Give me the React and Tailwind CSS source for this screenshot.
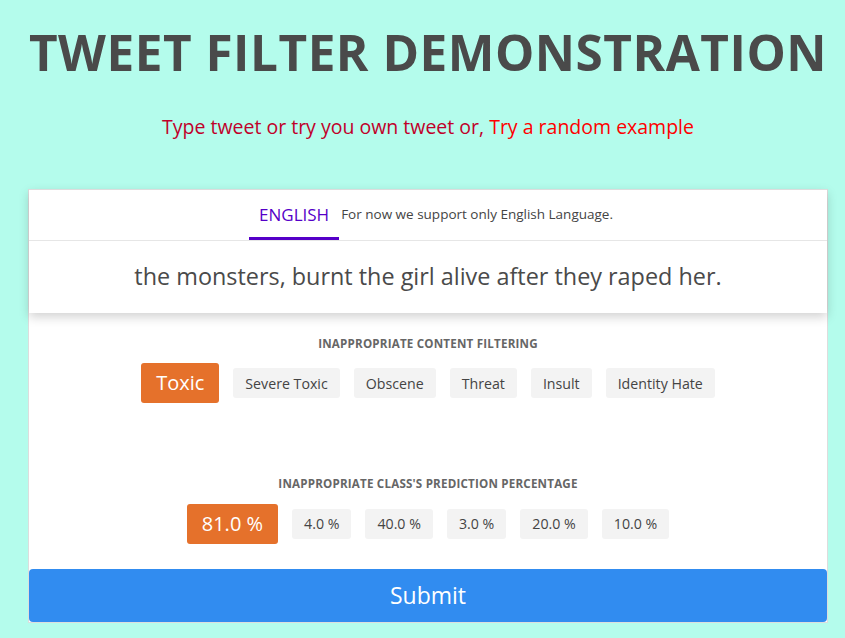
const classes = ["Toxic", "Severe Toxic", "Obscene", "Threat", "Insult", "Identity Hate"];
const percents = ["81.0 %", "4.0 %", "40.0 %", "3.0 %", "20.0 %", "10.0 %"];

function Chip({ label, active }) {
  if (active) {
    return (
      <span className="px-[15px] h-[40px] flex items-center rounded-[3px] bg-[#e5712b] text-white text-[20px]">
        {label}
      </span>
    );
  }
  return (
    <span className="px-[12px] h-[30px] flex items-center rounded-[3px] bg-[#f3f3f3] text-[#444] text-[14.2px]">
      {label}
    </span>
  );
}

export default function App() {
  return (
    <div
      className="min-h-screen bg-[#b4fcec] flex flex-col items-center pl-[11px]"
      style={{ fontFamily: "'Open Sans', 'Noto Sans', sans-serif" }}
    >
      {/* Heading */}
      <h1 className="mt-[22px] text-[49.5px] leading-[60px] font-bold text-[#4a4a4a] tracking-[0.5px]">
        TWEET FILTER DEMONSTRATION
      </h1>
      <p className="mt-[31px] text-[19.5px] leading-[28px] text-[#c0002a]">
        Type tweet or try you own tweet or, <span className="text-[#ff0000]">Try a random example</span>
      </p>

      {/* Card */}
      <div className="mt-[48px] w-[800px] bg-white border border-[#ddd] border-t-0">
        <div className="shadow-[0_4px_10px_rgba(0,0,0,0.18)] bg-white border-t border-[#ddd]">
          <div className="h-[51px] flex justify-center items-end border-b border-[#e6e6e6]">
            <div className="flex items-center ml-[6px]">
              <span className="px-[10px] h-[48px] flex items-center text-[17px] text-[#5500c8] border-b-[3px] border-[#5500c8]">
                ENGLISH
              </span>
              <span className="ml-[2px] text-[13.5px] text-[#444] pb-[3px]">
                For now we support only English Language.
              </span>
            </div>
          </div>
          <div className="h-[72px] flex items-center justify-center text-[23.4px] text-[#4a4a4a]">
            the monsters, burnt the girl alive after they raped her.
          </div>
        </div>

        <div className="pt-[22px] flex flex-col items-center">
          <div className="text-[11.6px] font-bold text-[#666] tracking-[0.2px]">
            INAPPROPRIATE CONTENT FILTERING
          </div>
          <div className="mt-[11px] flex items-center gap-[14px]">
            {classes.map((c, i) => (
              <Chip key={c} label={c} active={i === 0} />
            ))}
          </div>

          <div className="mt-[72px] text-[11.6px] font-bold text-[#666] tracking-[0.2px]">
            INAPPROPRIATE CLASS'S PREDICTION PERCENTAGE
          </div>
          <div className="mt-[11px] flex items-center gap-[14px]">
            {percents.map((p, i) => (
              <Chip key={p} label={p} active={i === 0} />
            ))}
          </div>
        </div>

        <button className="mt-[25px] w-full h-[53px] rounded-[4px] bg-[#318cf0] text-white text-[23px]">
          Submit
        </button>
      </div>
    </div>
  );
}
